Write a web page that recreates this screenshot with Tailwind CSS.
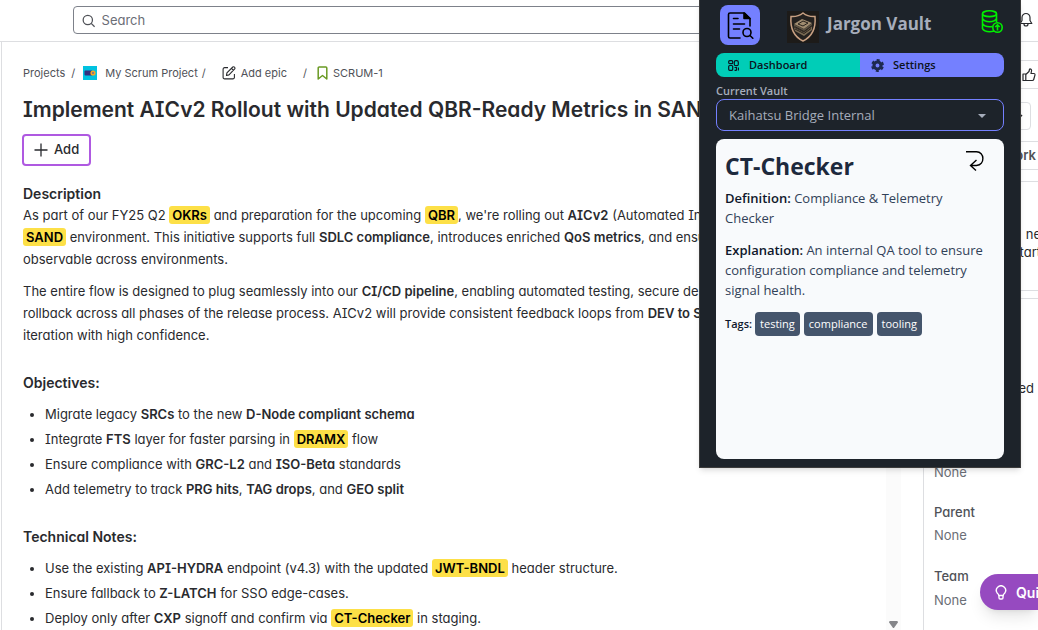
<!DOCTYPE html>
<html lang="en">
<head>
<meta charset="utf-8">
<title>SCRUM-1</title>
<script src="https://cdn.jsdelivr.net/npm/@tailwindcss/browser@4"></script>
</head>
<body class="relative flex h-screen flex-col overflow-hidden bg-white font-['Inter','Liberation_Sans',sans-serif] text-[13px] text-[#292a2e] [font-feature-settings:'cv11','cv08']">

<header class="flex h-[42px] shrink-0 items-center gap-3 border-b border-[#dddee1] pr-[5px] pl-[73px] pb-[1px]">
  <label class="flex h-7 flex-1 items-center gap-[6px] rounded border border-[#7d818a] px-2 pt-px text-[#505258]">
    <svg class="size-[14px]" viewBox="0 0 14 14" fill="none" stroke="currentColor" stroke-width="1.3"><circle cx="6" cy="6" r="4.8"/><path d="M9.5 9.5 13 13"/></svg>
    <input type="text" aria-label="Search" placeholder="Search" class="w-full outline-none placeholder:text-[#6b6e76]">
  </label>
  <button class="ml-[280px] text-[#292a2e]" aria-label="Notifications">
    <svg class="h-4 w-[14px]" viewBox="0 0 14 16" fill="none" stroke="currentColor" stroke-width="1.2" stroke-linejoin="round"><path d="M7 1.5a4 4 0 0 0-4 4v3L1.2 11.5h11.6L11 8.500v-3a4 4 0 0 0-4-4ZM5 12a2 2 0 0 0 4 0"/></svg>
  </button>
</header>

<div class="ml-[1px] flex min-h-0 flex-1 border-l border-[#dddee1]">
  <main class="min-w-0 flex-1 overflow-hidden pt-[22px] pl-[21px] whitespace-nowrap">
    <nav class="flex h-[18px] items-center text-[11px] text-[#505258]" aria-label="Breadcrumb">
      <a href="#">Projects</a>
      <span class="mr-2 ml-[6px]">/</span>
      <a href="#" class="flex items-center gap-2">
        <svg class="size-[14px]" viewBox="0 0 14 14"><path fill="#00c2e0" d="M0 0h14v14H0z"/><rect x="1.500" y="4.500" width="8" height="5" rx="1" fill="#352f7d"/><circle cx="10" cy="7" r="2.600" fill="#f5a623"/><circle cx="10" cy="7" r="1" fill="#6a6aa0"/></svg>
        My Scrum Project</a>
      <span class="mr-4 ml-1">/</span>
      <a href="#" class="flex items-center gap-[5px]">
        <svg class="size-[14px]" viewBox="0 0 14 14" fill="none" stroke="#292a2e" stroke-width="1.1" stroke-linejoin="round"><path d="M6 1.600H2.600a1.500 1.500 0 0 0-1.500 1.500v8.300a1.500 1.500 0 0 0 1.500 1.500h8.300a1.500 1.500 0 0 0 1.500-1.500V8M4.500 9.500l.4-2.600L10.800 1q.9-.6 1.700.2t.2 1.700L7 8.900ZM9.500 2.400l2 2"/></svg>
        Add epic</a>
      <span class="mr-[10px] ml-4">/</span>
      <a href="#" class="flex items-center gap-[5px]">
        <svg class="h-[14px] w-[11px]" viewBox="0 0 11 14" fill="none" stroke="#6a9a23" stroke-width="1.500" stroke-linejoin="round"><path d="M1.200 2a1 1 0 0 1 1-1h6.600a1 1 0 0 1 1 1v11L5.500 9.500 1.200 13Z"/></svg>
        SCRUM-1</a>
    </nav>
    <h1 class="mt-[13px] text-[21px] leading-[30px] font-semibold">Implement AICv2 Rollout with Updated QBR-Ready Metrics in SAND</h1>
    <button class="-ml-px mt-[9px] flex h-8 items-center gap-[6px] rounded border-2 border-[#af59e1] px-[10px] font-medium">
      <svg class="size-[14px]" viewBox="0 0 14 14" stroke="currentColor" stroke-width="1.300"><path d="M7 .5v13M.5 7h13"/></svg>
      Add</button>

    <h2 class="mt-[18px] text-[14px] leading-5 font-semibold">Description</h2>
    <p class="leading-[22px]">As part of our FY25 Q2 <mark class="rounded-[3px] bg-[#fde047] px-[3px] py-px font-semibold text-black">OKRs</mark> and preparation for the upcoming <mark class="rounded-[3px] bg-[#fde047] px-[3px] py-px font-semibold text-black">QBR</mark>, we're rolling out <b class="font-semibold">AICv2</b> (Automated Insights)<br>
      <mark class="rounded-[3px] bg-[#fde047] px-[3px] py-px font-semibold text-black">SAND</mark> environment. This initiative supports full <b class="font-semibold">SDLC compliance</b>, introduces enriched <b class="font-semibold">QoS metrics</b>, and ensures<br>
      observable across environments.</p>
    <p class="mt-[10px] leading-[22px]">The entire flow is designed to plug seamlessly into our <b class="font-semibold">CI/CD pipeline</b>, enabling automated testing, secure deploy<br>
      rollback across all phases of the release process. AICv2 will provide consistent feedback loops from <b class="font-semibold">DEV to STAG</b><br>
      iteration with high confidence.</p>

    <h3 class="mt-[27px] text-[14px] leading-5 font-semibold">Objectives:</h3>
    <ul class="mt-[10px] flex list-disc flex-col gap-[3px] pl-[22px] leading-[22px]">
      <li>Migrate legacy <b class="font-semibold">SRCs</b> to the new <b class="font-semibold">D-Node compliant schema</b></li>
      <li>Integrate <b class="font-semibold">FTS</b> layer for faster parsing in <mark class="rounded-[3px] bg-[#fde047] px-[3px] py-px font-semibold text-black">DRAMX</mark> flow</li>
      <li>Ensure compliance with <b class="font-semibold">GRC-L2</b> and <b class="font-semibold">ISO-Beta</b> standards</li>
      <li>Add telemetry to track <b class="font-semibold">PRG hits</b>, <b class="font-semibold">TAG drops</b>, and <b class="font-semibold">GEO split</b></li>
    </ul>
    <h3 class="mt-[27px] text-[14px] leading-5 font-semibold">Technical Notes:</h3>
    <ul class="mt-[10px] flex list-disc flex-col gap-[3px] pl-[22px] leading-[22px]">
      <li>Use the existing <b class="font-semibold">API-HYDRA</b> endpoint (v4.3) with the updated <mark class="rounded-[3px] bg-[#fde047] px-[3px] py-px font-semibold text-black">JWT-BNDL</mark> header structure.</li>
      <li>Ensure fallback to <b class="font-semibold">Z-LATCH</b> for SSO edge-cases.</li>
      <li>Deploy only after <b class="font-semibold">CXP</b> signoff and confirm via <mark class="rounded-[3px] bg-[#fde047] px-[3px] py-px font-semibold text-black">CT-Checker</mark> in staging.</li>
    </ul>
  </main>

  <div class="flex w-[15px] shrink-0 items-end justify-center bg-[#fbfbfb] pb-[2px]" aria-hidden="true">
    <svg class="h-[7px] w-[9px]" viewBox="0 0 9 7" fill="#85868a"><path d="M1 0h7q1.500.5.7 1.800L5.300 6.400q-.8 1-1.600 0L.3 1.800Q-.5.5 1 0Z"/></svg>
  </div>

  <aside class="ml-[22px] flex w-[115px] shrink-0 flex-col overflow-hidden border-l border-[#dddee1] whitespace-nowrap">
    <div class="mt-[18px] flex h-[29px] shrink-0 items-center justify-end border-y border-[#dddee1] pr-[2px]">
      <button aria-label="Like">
        <svg class="size-[14px]" viewBox="0 0 14 14" fill="none" stroke="#292a2e" stroke-width="1.200" stroke-linejoin="round"><path d="M1 6h2.800v6.500H1ZM3.800 6.500 7 3.500 7.600 1q1.800-.3 2 1.500L9 5.500h3q1.200.3 1 1.400l-1.300 4.600q-.3 1-1.400 1H3.800"/></svg>
      </button>
    </div>
    <button class="mt-[13px] mr-[7px] ml-[9px] flex h-7 shrink-0 items-center justify-end rounded border border-[#dddee1] pr-[7px]" aria-label="Status">
      <svg class="h-[5px] w-2" viewBox="0 0 8 5" fill="none" stroke="#292a2e" stroke-width="1.500"><path d="m1 1 3 3 3-3"/></svg>
    </button>
    <div class="mt-[11px] flex h-[29px] shrink-0 items-center justify-end border-y border-[#dddee1] pr-[2px] font-semibold text-[#505258]">Improve work</div>
    <div class="mt-[11px] flex h-[110px] shrink-0 flex-col items-end border-y border-[#dddee1] pt-[43px] leading-[18px]">
      <span class="-mr-[3px]">ne</span><span class="-mr-[3px]">tart</span>
    </div>
    <div class="mt-[7px] flex flex-1 flex-col border-t border-[#dddee1] pt-[79px] pl-[10px] text-[#6b6e76]">
      <span class="self-end pr-1 leading-5 text-[#292a2e]">Unassigned</span>
      <span class="mt-16 leading-5">None</span>
      <span class="mt-5 leading-5 font-medium text-[#505258]">Parent</span>
      <span class="mt-[3px] leading-5">None</span>
      <span class="mt-[21px] leading-5 font-medium text-[#505258]">Team</span>
      <span class="mt-1 leading-5">None</span>
    </div>
  </aside>
</div>

<button class="absolute right-0 bottom-5 flex h-9 w-[58px] items-center gap-[9px] overflow-hidden rounded-l-full bg-[#964ac0] pl-[15px] text-[14px] font-semibold whitespace-nowrap text-white shadow-lg">
  <svg class="h-[15px] w-3 shrink-0" viewBox="0 0 12 15" fill="none" stroke="currentColor" stroke-width="1.400"><path d="M3.800 10.500Q3.700 9.200 2.300 8.200A4.600 4.600 0 1 1 9.700 8.200Q8.300 9.200 8.200 10.500ZM4 10.500v2.300q0 1.200 1.200 1.200h1.600q1.200 0 1.200-1.200v-2.300"/></svg>
  Qui</button>

<section class="absolute top-0 right-[17px] flex w-[322px] flex-col border border-t-0 border-[#3c3c3c] bg-[#1d232a] px-4 pb-2 font-['Open_Sans','Noto_Sans',sans-serif] text-[#a6adbb] shadow-md [font-feature-settings:normal]" aria-label="Jargon Vault">
  <div class="flex h-[45px] items-end pl-1">
    <button class="flex size-10 items-center justify-center rounded-lg bg-[#7480ff] text-black" aria-label="Scan page">
      <svg class="size-7" viewBox="0 0 28 28" fill="none" stroke="currentColor" stroke-width="1.600" stroke-linejoin="round" stroke-linecap="round"><path d="M14 27H4q-1.500 0-1.500-1.500v-22Q2.500 2 4 2h14.500l5.500 5.500V15M7.500 7.500h4.500M7.500 13h11M7.500 18h6"/><path d="M18 2v5.500h6Z" fill="currentColor"/><circle cx="21" cy="21.500" r="4"/><path d="m24 24.500 2.800 2.800"/></svg>
    </button>
    <svg class="mb-[2px] ml-[27px] size-8" viewBox="0 0 32 32" aria-hidden="true"><path fill="#1d1b19" d="M0 0h32v32H0z"/><path d="M16 2q5 4 12 3.500 1.500 18-12 24.500Q2.500 23.500 4 5.500 11 6 16 2Z" fill="#24211f" stroke="#c9a183" stroke-width="1.500"/><path d="m7 13 8-5 10 4-8 6Z" fill="#a08c70"/><path d="m7 13 10 5v3L7 16Zm10 5 8-6v3l-8 6Z" fill="#5c5142"/><path d="m7 16.500 10 5 8-6v3.500l-8 6-9-5Z" fill="#7a6a53"/><path d="m11 13 5-3 5 2-5 3ZM8 18l9 4.500 7-5M7.500 15.500l9.500 5 8-6" fill="none" stroke="#29231d" stroke-width="1"/></svg>
    <h2 class="mb-[7px] ml-2 text-[17px] leading-7 font-bold">Jargon Vault</h2>
    <button class="mr-px mb-3 ml-auto text-[#00f000]" aria-label="Upload to vault">
      <svg class="h-[23px] w-[22px]" viewBox="0 0 22 23" fill="none" stroke="currentColor" stroke-width="1.600"><ellipse cx="8.500" cy="3.700" rx="7" ry="2.900"/><path d="M1.500 3.700v15q1.500 3 7 3 2.500 0 4.500-.6M15.500 3.700v8.600M1.500 8.700q1.500 3 7 3t7-3M1.500 13.700q1.500 3 7 3 1.500 0 3-.2"/><circle cx="16.500" cy="17.500" r="4.700"/><path d="M16.500 20.500v-5.500m-2.200 2 2.200-2.200 2.200 2.200"/></svg>
    </button>
  </div>
  <div class="mt-2 grid h-6 grid-cols-2 overflow-hidden rounded-lg text-[11px] font-semibold text-[#0b1220]">
    <button class="flex items-center gap-[10px] bg-[#00cdb7] pl-3">
      <svg class="size-[11px]" viewBox="0 0 11 11" fill="none" stroke="currentColor" stroke-width="1.200"><rect x=".7" y=".7" width="4" height="3" rx="1"/><rect x="6.300" y=".7" width="4" height="5" rx="1.500"/><rect x=".7" y="5.500" width="4" height="4.800" rx="1"/><path d="M6.500 7.500h2v3M10.500 7.500v3M6.500 10.300h2"/></svg>
      Dashboard</button>
    <button class="flex items-center gap-[9px] bg-[#7480ff] pl-[11px]">
      <svg class="size-[13px] text-[#1e2a50]" viewBox="0 0 14 14" fill="none" stroke="currentColor"><circle cx="7" cy="7" r="3.800" stroke-width="3.400"/><circle cx="7" cy="7" r="5.700" stroke-width="2.400" stroke-dasharray="3.200 2.769" stroke-dashoffset="-1.400"/></svg>
      Settings</button>
  </div>
  <label for="vault" class="mt-[6px] text-[11px] leading-4 font-semibold">Current Vault</label>
  <div class="relative">
    <select id="vault" class="h-8 w-full appearance-none rounded-lg border border-[#7480ff] bg-[#1d232a] px-3 pt-[2px] text-[13px]"><option>Kaihatsu Bridge Internal</option></select>
    <svg class="pointer-events-none absolute top-[15px] right-[18px] h-1 w-2" viewBox="0 0 8 4" fill="currentColor"><path d="M0 0h8L4 4Z"/></svg>
  </div>
  <article class="relative mt-2 h-80 rounded-lg bg-slate-50 px-[9px] pt-[10px] text-[13px] leading-5 text-slate-700">
    <button class="absolute top-[11px] right-[19px] text-black" aria-label="Back">
      <svg class="h-[22px] w-5" viewBox="0 0 20 22" fill="none" stroke="currentColor" stroke-width="1.400"><path d="M1 1.700h10.500c8 0 9 13 0 13.800H6M11.500 10 5.500 15.500l5.500 5"/></svg>
    </button>
    <h3 class="text-[23px] leading-[34px] font-bold text-slate-800">CT-Checker</h3>
    <p class="mt-[5px]"><b class="font-semibold text-slate-900">Definition:</b> Compliance &amp; Telemetry<br>Checker</p>
    <p class="mt-3"><b class="font-semibold text-slate-900">Explanation:</b> An internal QA tool to ensure configuration compliance and telemetry signal health.</p>
    <div class="mt-3 flex items-center gap-1 text-[11px]">
      <b class="-mr-px font-semibold text-slate-900">Tags:</b>
      <span class="rounded bg-slate-600 px-[5px] py-[2px] text-white">testing</span>
      <span class="rounded bg-slate-600 px-[5px] py-[2px] text-white">compliance</span>
      <span class="rounded bg-slate-600 px-[5px] py-[2px] text-white">tooling</span>
    </div>
  </article>
</section>
</body>
</html>
